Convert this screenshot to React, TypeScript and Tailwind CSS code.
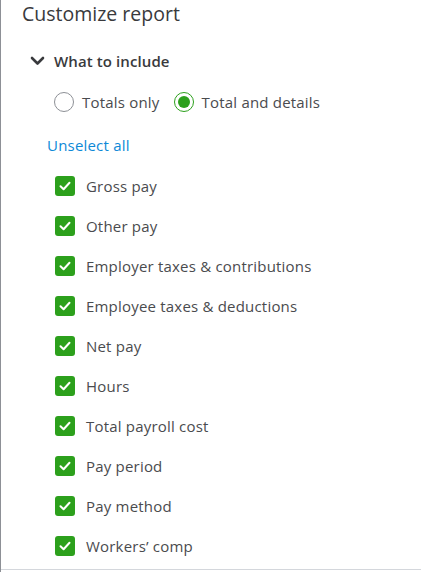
import React from 'react';

const items = [
  'Gross pay',
  'Other pay',
  'Employer taxes & contributions',
  'Employee taxes & deductions',
  'Net pay',
  'Hours',
  'Total payroll cost',
  'Pay period',
  'Pay method',
  'Workers\u2019 comp',
];

function Radio({ checked, label }: { checked?: boolean; label: string }) {
  return (
    <label className="flex items-center gap-[8px]">
      {checked ? (
        <span className="w-[20px] h-[20px] rounded-full border-[1.5px] border-[#2ca01c] flex items-center justify-center">
          <span className="w-[12px] h-[12px] rounded-full bg-[#2ca01c]" />
        </span>
      ) : (
        <span className="w-[20px] h-[20px] rounded-full border border-[#8d9096]" />
      )}
      <span>{label}</span>
    </label>
  );
}

function Check({ label }: { label: string }) {
  return (
    <div className="h-[40px] flex items-center gap-[11px] pl-[54px]">
      <span className="w-[20px] h-[20px] rounded-[3px] bg-[#2ca01c] flex items-center justify-center">
        <svg width="12" height="10" viewBox="0 0 12 10" fill="none">
          <path d="M1.5 5.2L4.6 8.2L10.5 1.8" stroke="white" strokeWidth="2" strokeLinecap="round" strokeLinejoin="round" />
        </svg>
      </span>
      <span>{label}</span>
    </div>
  );
}

export default function App() {
  return (
    <div
      className="w-[421px] h-[572px] bg-white border-l border-[#8d9096] overflow-hidden text-[#393a3d]"
      style={{ fontFamily: '"Open Sans", "Liberation Sans", sans-serif' }}
    >
      {/* Title */}
      <div className="h-[28px] pl-[21px] text-[19.5px] leading-[28px] text-[#393a3d]">Customize report</div>

      {/* Section header */}
      <div className="mt-[21px] h-[24px] flex items-center pl-[29px] gap-[9px]">
        <svg width="15" height="10" viewBox="0 0 15 10" fill="none">
          <path d="M2 2L7.5 7.5L13 2" stroke="#393a3d" strokeWidth="2.6" strokeLinecap="round" strokeLinejoin="round" />
        </svg>
        <span className="text-[15px] font-semibold tracking-[0.1px]">What to include</span>
      </div>

      {/* Radios */}
      <div className="mt-[17px] h-[24px] flex items-center pl-[53px] gap-[14px] text-[15px] tracking-[0.2px] text-[#4a4b4e]">
        <Radio label="Totals only" />
        <Radio checked label="Total and details" />
      </div>

      {/* Unselect all */}
      <div className="mt-[20px] h-[22px] flex items-center pl-[46px] text-[15px] tracking-[0.2px] text-[#0d89d7]">Unselect all</div>

      {/* Checkbox list */}
      <div className="mt-[10px] text-[15px] tracking-[0.2px] text-[#4a4b4e] border-b border-[#d4d7dc] pb-[3px]">
        {items.map((it) => (
          <Check key={it} label={it} />
        ))}
      </div>
    </div>
  );
}
